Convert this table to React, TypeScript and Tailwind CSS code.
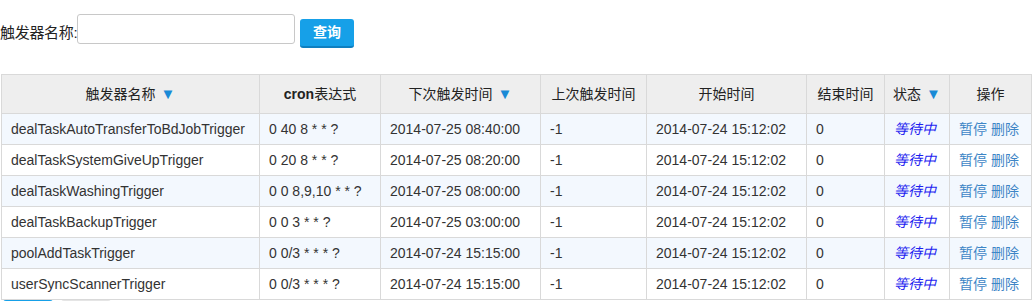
import { ReactNode } from "react"

type Trigger = {
  name: string
  cron: string
  next: string
  prev: string
  start: string
  end: string
}

const triggers: Trigger[] = [
  { name: "dealTaskAutoTransferToBdJobTrigger", cron: "0 40 8 * * ?", next: "2014-07-25 08:40:00", prev: "-1", start: "2014-07-24 15:12:02", end: "0" },
  { name: "dealTaskSystemGiveUpTrigger", cron: "0 20 8 * * ?", next: "2014-07-25 08:20:00", prev: "-1", start: "2014-07-24 15:12:02", end: "0" },
  { name: "dealTaskWashingTrigger", cron: "0 0 8,9,10 * * ?", next: "2014-07-25 08:00:00", prev: "-1", start: "2014-07-24 15:12:02", end: "0" },
  { name: "dealTaskBackupTrigger", cron: "0 0 3 * * ?", next: "2014-07-25 03:00:00", prev: "-1", start: "2014-07-24 15:12:02", end: "0" },
  { name: "poolAddTaskTrigger", cron: "0 0/3 * * * ?", next: "2014-07-24 15:15:00", prev: "-1", start: "2014-07-24 15:12:02", end: "0" },
  { name: "userSyncScannerTrigger", cron: "0 0/3 * * * ?", next: "2014-07-24 15:15:00", prev: "-1", start: "2014-07-24 15:12:02", end: "0" },
]

// 排序箭头
function SortArrow() {
  return <span className="ml-[5px] text-[15px] leading-none text-[#1a8ad6]">▼</span>
}

function Th({ children, w }: { children: ReactNode; w: string }) {
  return (
    <th className={`${w} h-[39px] border border-[#d9d9d9] bg-[#eeeeee] text-center font-normal text-[#222]`}>
      {children}
    </th>
  )
}

function Td({ children, className = "" }: { children: ReactNode; className?: string }) {
  return <td className={`h-[31px] border border-[#d9d9d9] pl-[9px] ${className}`}>{children}</td>
}

export default function App() {
  return (
    <div className="w-[1032px] h-[301px] overflow-hidden bg-white text-[14px] text-[#333] font-['Liberation_Sans','Noto_Sans_CJK_SC',sans-serif]">
      {/* 查询条件 */}
      <div className="flex items-start pt-[14px]">
        <label className="mt-[8px] w-[77px] whitespace-nowrap text-[15px] tracking-[-0.3px] text-[#222]">触发器名称:</label>
        <input
          type="text"
          className="w-[218px] h-[30px] rounded-[3px] border border-[#c8c8c8] px-2 outline-none"
        />
        <button className="ml-[5px] mt-[5px] w-[54px] h-[29px] rounded-[3px] bg-[#16a0e8] border-b-2 border-[#0e7fc0] text-white text-[14px] font-bold">
          查询
        </button>
      </div>

      {/* 触发器列表 */}
      <table className="ml-px mt-[26px] w-[1031px] table-fixed border-collapse">
        <thead>
          <tr>
            <Th w="w-[258px]">触发器名称<SortArrow /></Th>
            <Th w="w-[121px]"><span className="font-bold">cron</span>表达式</Th>
            <Th w="w-[160px]">下次触发时间<SortArrow /></Th>
            <Th w="w-[106px]">上次触发时间</Th>
            <Th w="w-[160px]">开始时间</Th>
            <Th w="w-[78px]">结束时间</Th>
            <Th w="w-[65px]">状态<SortArrow /></Th>
            <Th w="w-[82px]">操作</Th>
          </tr>
        </thead>
        <tbody>
          {triggers.map((t, i) => (
            <tr key={t.name} className={i % 2 === 0 ? "bg-[#f3f8fe]" : "bg-white"}>
              <Td>{t.name}</Td>
              <Td>{t.cron}</Td>
              <Td>{t.next}</Td>
              <Td>{t.prev}</Td>
              <Td>{t.start}</Td>
              <Td>{t.end}</Td>
              <Td className="italic text-[#1f1ff0]">等待中</Td>
              <Td className="text-[#3d85c6]">
                <a className="cursor-pointer">暂停</a> <a className="cursor-pointer">删除</a>
              </Td>
            </tr>
          ))}
        </tbody>
      </table>

      {/* 分页 */}
      <div className="flex gap-[8px] pl-[3px]">
        <div className="w-[50px] h-[24px] rounded-[3px] bg-[#16a0e8]" />
        <div className="w-[50px] h-[24px] rounded-[3px] bg-[#e5e5e5]" />
      </div>
    </div>
  )
}
